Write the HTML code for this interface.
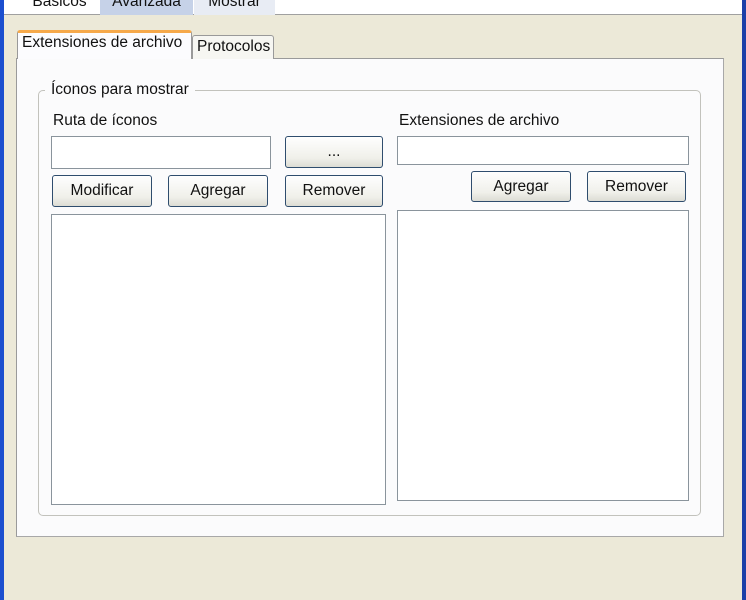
<!DOCTYPE html>
<html><head><style>
body{margin:0;width:746px;height:600px;position:relative;overflow:hidden;background:#ece9d8;font-family:"Liberation Sans",sans-serif;font-size:15.5px;color:#111}
div{position:absolute;box-sizing:border-box}
.btn{border:1px solid #2f4d6e;border-radius:3px;background:linear-gradient(#fefefe,#f0f0ea 70%,#dcdcd4);text-align:center;font-size:15.5px}
.inp{border:1px solid #8a949c;background:#fff}
</style></head><body>
<div style="left:0;top:0;width:746px;height:15px;background:#fff;border-bottom:1px solid #a0a0a0"></div>
<div style="left:20px;top:-7px;width:79px;height:22px;text-align:center">Basicos</div>
<div style="left:100px;top:-7px;width:93px;height:22px;background:#c6d2e8;text-align:center">Avanzada</div>
<div style="left:194px;top:-7px;width:81px;height:22px;background:#e8ecf4;text-align:center">Mostrar</div>
<div style="left:0;top:0;width:4px;height:600px;background:#1c4fcf"></div>
<div style="left:742px;top:0;width:4px;height:600px;background:#1c3fa8"></div>
<div style="left:16px;top:58px;width:708px;height:479px;background:#fbfbfc;border:1px solid #9a9a9a;border-right-color:#a8a8a8;border-bottom-color:#a8a8a8"></div>
<div style="left:192px;top:35px;width:82px;height:24px;background:#f6f6f2;border:1px solid #999;border-bottom:none;border-radius:3px 3px 0 0;padding:2px 0 0 4px">Protocolos</div>
<div style="left:17px;top:30px;width:175px;height:29px;background:#fcfcfe;border:1px solid #999;border-top:3px solid #f6a94a;border-bottom:none;border-radius:3px 3px 0 0;padding:1px 0 0 4px">Extensiones de archivo</div>
<div style="left:38px;top:90px;width:663px;height:426px;border:1px solid #c2c2bc;border-radius:5px"></div>
<div style="left:45px;top:81px;background:#fbfbfc;padding:0 6px">Íconos para mostrar</div>
<div style="left:53px;top:112px">Ruta de íconos</div>
<div class="inp" style="left:51px;top:136px;width:220px;height:33px"></div>
<div class="btn" style="left:285px;top:136px;width:98px;height:32px;line-height:30px">...</div>
<div class="btn" style="left:52px;top:175px;width:100px;height:32px;line-height:30px">Modificar</div>
<div class="btn" style="left:168px;top:175px;width:100px;height:32px;line-height:30px">Agregar</div>
<div class="btn" style="left:285px;top:175px;width:98px;height:32px;line-height:30px">Remover</div>
<div class="inp" style="left:51px;top:214px;width:335px;height:291px"></div>
<div style="left:399px;top:112px">Extensiones de archivo</div>
<div class="inp" style="left:397px;top:136px;width:292px;height:29px"></div>
<div class="btn" style="left:471px;top:171px;width:100px;height:31px;line-height:29px">Agregar</div>
<div class="btn" style="left:587px;top:171px;width:99px;height:31px;line-height:29px">Remover</div>
<div class="inp" style="left:397px;top:210px;width:292px;height:291px"></div>
</body></html>
